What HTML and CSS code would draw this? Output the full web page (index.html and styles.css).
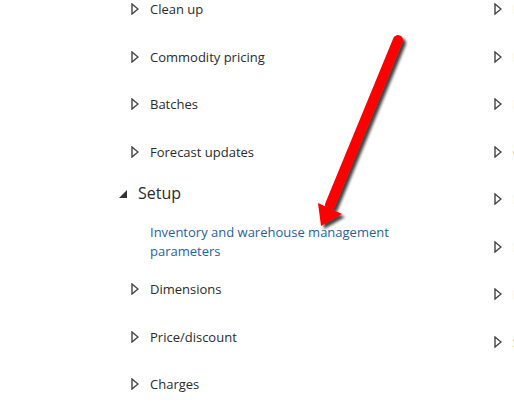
FILE: index.html
```html
<!DOCTYPE html>
<html>
<head>
<meta charset="utf-8">
<link rel="stylesheet" href="styles.css">
</head>
<body>
<div class="page">
  <div class="col left">
    <div class="item"><svg class="tri" width="8" height="12" viewBox="0 0 8 12"><path d="M1 1 L7 6 L1 11 Z" fill="none" stroke="#444" stroke-width="1.4"/></svg><span>Clean up</span></div>
    <div class="item"><svg class="tri" width="8" height="12" viewBox="0 0 8 12"><path d="M1 1 L7 6 L1 11 Z" fill="none" stroke="#444" stroke-width="1.4"/></svg><span>Commodity pricing</span></div>
    <div class="item"><svg class="tri" width="8" height="12" viewBox="0 0 8 12"><path d="M1 1 L7 6 L1 11 Z" fill="none" stroke="#444" stroke-width="1.4"/></svg><span>Batches</span></div>
    <div class="item"><svg class="tri" width="8" height="12" viewBox="0 0 8 12"><path d="M1 1 L7 6 L1 11 Z" fill="none" stroke="#444" stroke-width="1.4"/></svg><span>Forecast updates</span></div>
    <div class="group">
      <div class="group-head"><svg class="tri-open" width="9" height="9" viewBox="0 0 9 9"><path d="M8 0 L8 8 L0 8 Z" fill="#333"/></svg><span>Setup</span></div>
      <a class="link" href="#">Inventory and warehouse management<br>parameters</a>
    </div>
    <div class="item"><svg class="tri" width="8" height="12" viewBox="0 0 8 12"><path d="M1 1 L7 6 L1 11 Z" fill="none" stroke="#444" stroke-width="1.4"/></svg><span>Dimensions</span></div>
    <div class="item"><svg class="tri" width="8" height="12" viewBox="0 0 8 12"><path d="M1 1 L7 6 L1 11 Z" fill="none" stroke="#444" stroke-width="1.4"/></svg><span>Price/discount</span></div>
    <div class="item"><svg class="tri" width="8" height="12" viewBox="0 0 8 12"><path d="M1 1 L7 6 L1 11 Z" fill="none" stroke="#444" stroke-width="1.4"/></svg><span>Charges</span></div>
  </div>
  <div class="col right">
    <div class="item"><svg class="tri" width="8" height="12" viewBox="0 0 8 12"><path d="M1 1 L7 6 L1 11 Z" fill="none" stroke="#444" stroke-width="1.4"/></svg><span>Inbound</span></div>
    <div class="item"><svg class="tri" width="8" height="12" viewBox="0 0 8 12"><path d="M1 1 L7 6 L1 11 Z" fill="none" stroke="#444" stroke-width="1.4"/></svg><span>Inventory</span></div>
    <div class="item"><svg class="tri" width="8" height="12" viewBox="0 0 8 12"><path d="M1 1 L7 6 L1 11 Z" fill="none" stroke="#444" stroke-width="1.4"/></svg><span>Inquiries</span></div>
    <div class="item"><svg class="tri" width="8" height="12" viewBox="0 0 8 12"><path d="M1 1 L7 6 L1 11 Z" fill="none" stroke="#444" stroke-width="1.4"/></svg><span>Counting</span></div>
    <div class="item"><svg class="tri" width="8" height="12" viewBox="0 0 8 12"><path d="M1 1 L7 6 L1 11 Z" fill="none" stroke="#444" stroke-width="1.4"/></svg><span>Items</span></div>
    <div class="item"><svg class="tri" width="8" height="12" viewBox="0 0 8 12"><path d="M1 1 L7 6 L1 11 Z" fill="none" stroke="#444" stroke-width="1.4"/></svg><span>Issues</span></div>
    <div class="item"><svg class="tri" width="8" height="12" viewBox="0 0 8 12"><path d="M1 1 L7 6 L1 11 Z" fill="none" stroke="#444" stroke-width="1.4"/></svg><span>Inventory reports</span></div>
    <div class="item"><svg class="tri" width="8" height="12" viewBox="0 0 8 12"><path d="M1 1 L7 6 L1 11 Z" fill="none" stroke="#444" stroke-width="1.4"/></svg><span>Statistics</span></div>
  </div>
  <svg class="arrow" width="514" height="408" viewBox="0 0 514 408">
    <defs>
      <filter id="sh" x="-20%" y="-20%" width="140%" height="140%">
        <feGaussianBlur in="SourceAlpha" stdDeviation="1.6"/>
        <feOffset dx="3" dy="3" result="b"/>
        <feComponentTransfer><feFuncA type="linear" slope="0.75"/></feComponentTransfer>
        <feMerge><feMergeNode/><feMergeNode in="SourceGraphic"/></feMerge>
      </filter>
    </defs>
    <g filter="url(#sh)">
      <line x1="398" y1="40" x2="330" y2="205" stroke="#ff0000" stroke-width="10" stroke-linecap="round"/>
      <path d="M321 226 L318 203 L342 214 Z" fill="#ff0000"/>
    </g>
  </svg>
</div>
</body>
</html>
```
FILE: styles.css
```css
html, body {
  margin: 0;
  padding: 0;
  background: #fff;
}
body {
  width: 514px;
  height: 408px;
  overflow: hidden;
  font-family: "Open Sans", "Noto Sans", sans-serif;
  font-size: 13px;
  color: #2b2b2b;
}
.page {
  position: relative;
  width: 514px;
  height: 408px;
  display: flex;
}
.col {
  display: flex;
  flex-direction: column;
  margin-top: -1px;
}
.left {
  padding-left: 131px;
  width: 363px;
  flex: none;
}
.right {
  white-space: nowrap;
}
.item {
  display: flex;
  align-items: center;
  height: 20px;
  margin-bottom: 27.5px;
  white-space: nowrap;
}
.tri {
  flex: none;
  margin-right: 11px;
}
.group {
  display: flex;
  flex-direction: column;
  margin-top: -8px;
}
.group-head {
  display: flex;
  align-items: center;
  height: 24px;
  margin-left: -12px;
  font-size: 16px;
}
.tri-open {
  flex: none;
  margin-right: 10px;
  margin-top: 2px;
}
.link {
  display: block;
  margin: 18px 0 18px 19px;
  color: #1f5fa6;
  text-decoration: none;
  line-height: 19px;
}
.left .item:last-child {
  margin-bottom: 0;
}
.arrow {
  position: absolute;
  left: 0;
  top: 0;
  pointer-events: none;
}
```
